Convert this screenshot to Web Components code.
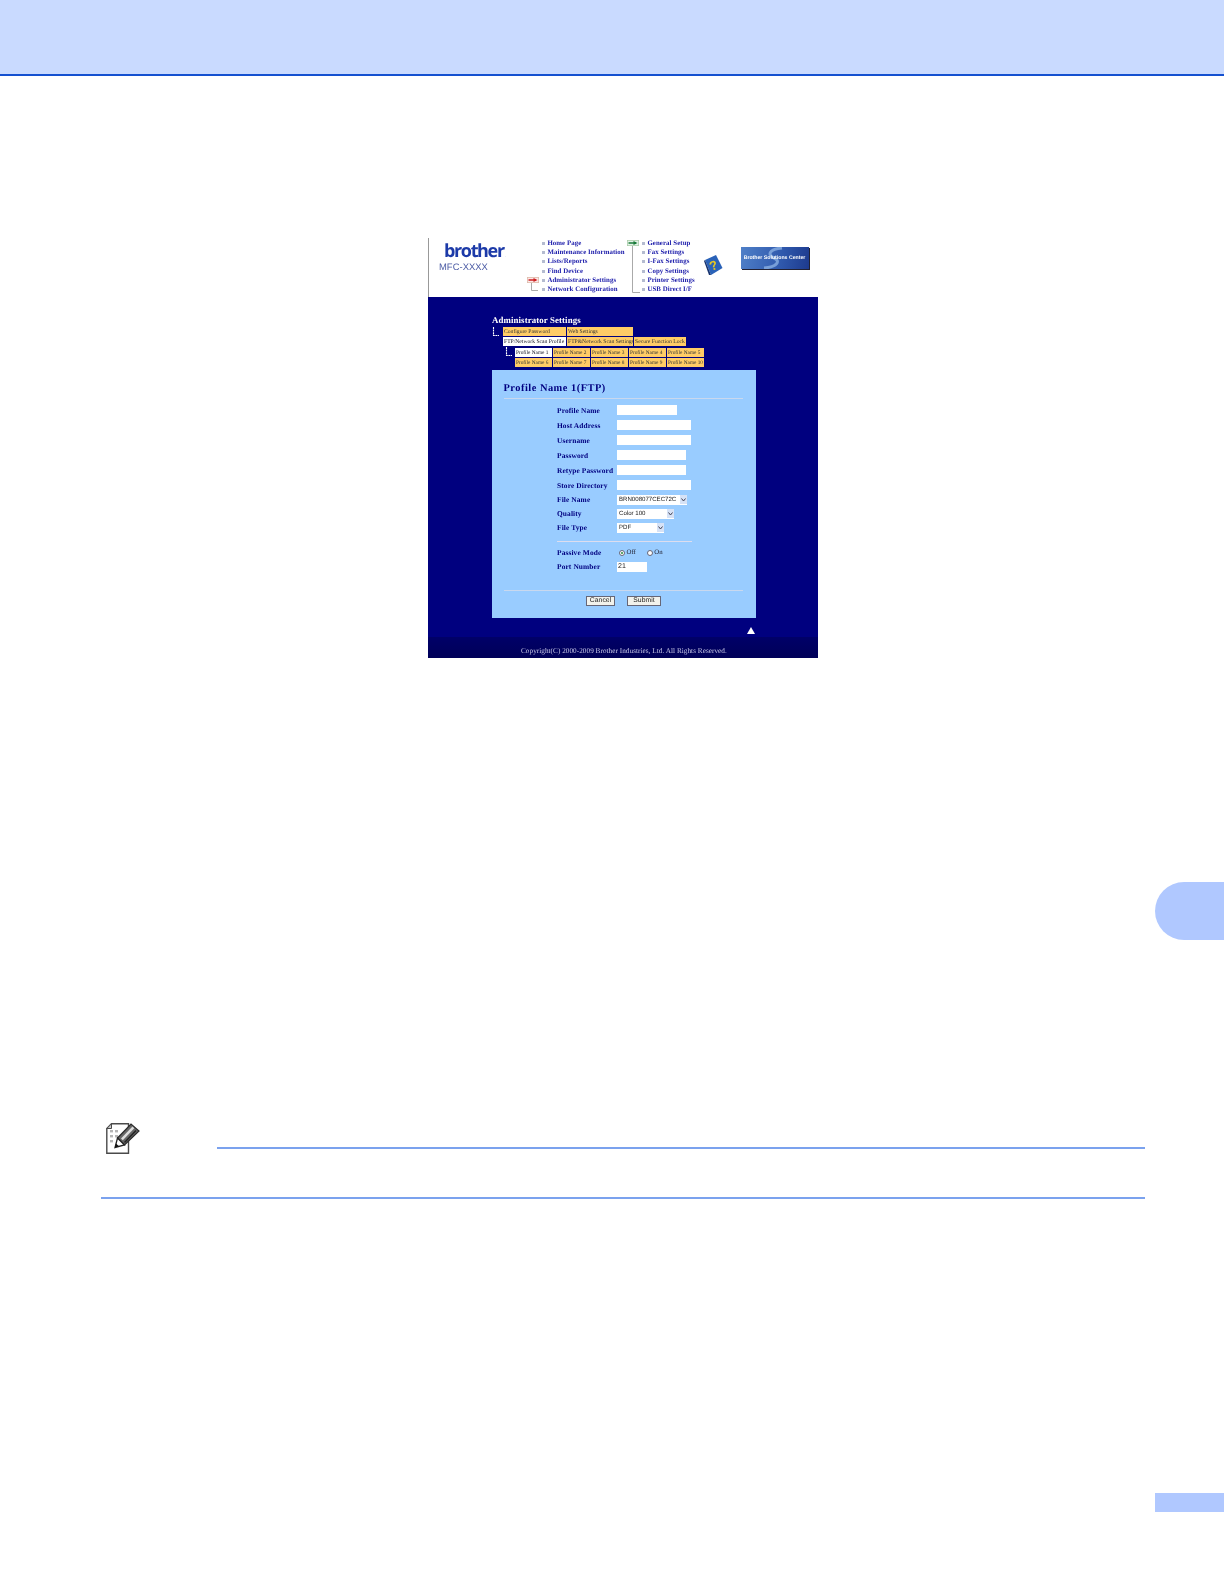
<!DOCTYPE html>
<html lang="en"><head><meta charset="utf-8"><title>Manual page</title>
<style>
html,body{margin:0;padding:0;background:#fff}
body{width:1224px;height:1584px;overflow:hidden;font-family:"Liberation Serif",serif}
</style></head><body>
<manual-page></manual-page>
<script>
function def(name,css,html){
  customElements.define(name,class extends HTMLElement{
    constructor(){super();const r=this.attachShadow({mode:'open'});
      const t=document.createElement('template');
      t.innerHTML='<style>'+css+'</style>'+(typeof html==='function'?html(this):html);
      r.appendChild(t.content.cloneNode(true));}
  });
}
const SERIF='"Liberation Serif",serif', SANS='"Liberation Sans",sans-serif';

def('manual-page',`:host{display:block;width:1224px;height:1584px}
 .top{height:74px;background:#c9daff;border-bottom:2px solid #1450d0}
 web-figure{margin:162px 0 0 428px}
 .side{margin:224px 0 0 1155px;height:58px;background:#b0c8ff;border-radius:29px 0 0 29px}
 note-block{margin-top:183px}
 .pg{margin:294px 0 0 1155px;height:19px;background:#b0c8ff}`,
 `<div class="top"></div><web-figure></web-figure><div class="side"></div><note-block></note-block><div class="pg"></div>`);

def('note-block',`:host{display:block;margin-left:101px;width:1044px;height:74px;border-bottom:2px solid #7ba2ee;box-sizing:content-box}
 .r{display:flex;align-items:flex-start;height:26px}
 svg{margin-left:5px;flex:none;display:block}
 .l{margin-left:77px;margin-top:24px;flex:1;height:2px;background:#7ba2ee}`,
 `<div class="r"><svg width="34" height="32" viewBox="0 0 34 32">
   <path d="M5.5 .8H22.5V30.3H.8V5.5Z" fill="#fff" stroke="#4a4a4a" stroke-width="1.4"/>
   <path d="M5.5 .8V5.5H.8Z" fill="#ccc" stroke="#4a4a4a" stroke-width="1"/>
   <g fill="#b5b5b5"><rect x="4" y="7" width="3" height="2.4"/><rect x="9" y="7" width="3" height="2.4"/><rect x="4" y="12" width="3" height="2.4"/><rect x="9" y="12" width="3" height="2.4"/><rect x="4" y="17" width="3" height="2.4"/></g>
   <path d="M11.5 15 25 1 33 8 18.5 22Z" fill="#666" stroke="#2a2a2a" stroke-width="1.2"/>
   <path d="M15 15.5 26.5 3.6 28.3 5.2 16.8 17.3Z" fill="#ddd"/><path d="M18 19 29.5 7 30.6 8 19 20Z" fill="#222"/>
   <path d="M11.5 15 18.5 22 9 24.5Z" fill="#fff" stroke="#222" stroke-width="1.3"/><path d="M9 24.5 10 20.5 13 23.3Z" fill="#111"/>
 </svg><div class="l"></div></div>`);

def('web-figure',`:host{display:block;width:390px;height:420px;filter:blur(.3px);text-rendering:geometricPrecision}`,
 `<top-bar></top-bar><blue-main></blue-main>`);

def('top-bar',`:host{display:flex;height:59px;box-sizing:border-box;border-left:1px solid #999;background:#fff;align-items:flex-start}
 .logo{width:98px;flex:none}
 .b{font:bold 18px/16px "Open Sans",${SANS};color:#1c3aa8;letter-spacing:-1.35px;margin:5px 0 0 15px;height:15px}
 .b i{font:normal 3px ${SANS};letter-spacing:0;margin-left:1px}
 .m{font:9.4px/11px ${SANS};color:#4a5aa4;letter-spacing:.05px;margin:3px 0 0 10px}
 .book{margin:17px 0 0 -1px;flex:none;display:block}
 .sol{margin:9px 0 0 17.5px;width:68px;height:22px;flex:none;position:relative;background:linear-gradient(100deg,#4f80c8,#2f58ac 60%,#1d3a8e);box-shadow:1px 1px 0 #223;overflow:hidden;
   font:bold 5.2px/22px ${SANS};color:#fff;text-align:center;white-space:nowrap}
 .sol svg{position:absolute;left:20px;top:0}
 .sol span{position:relative}`,
 `<div class="logo"><div class="b">brother<i>.</i></div><div class="m">MFC-XXXX</div></div>
 <nav-col style="width:100px" kind="red" items="Home Page|Maintenance Information|Lists/Reports|Find Device|Administrator Settings|Network Configuration"></nav-col>
 <nav-col style="width:78px" kind="green" items="General Setup|Fax Settings|I-Fax Settings|Copy Settings|Printer Settings|USB Direct I/F"></nav-col>
 <svg class="book" width="19" height="20" viewBox="0 0 19 20"><path d="M1 5 12 0 18.5 13 7 20Z" fill="#2a62b8"/><path d="M1 5 7 20 5 20 0 6Z" fill="#16336f"/><text x="5.4" y="15" font-family="Liberation Sans" font-weight="bold" font-size="13" fill="#e8c820" transform="rotate(-20 9 10)">?</text></svg>
 <div class="sol"><svg width="26" height="22" viewBox="0 0 26 22"><path d="M21 1C8 2 6 8 13 11S16 20 3 21" fill="none" stroke="#8fb4e6" stroke-width="3" opacity=".75"/></svg><span>Brother Solutions Center</span></div>`);

def('nav-col',`:host{display:flex;flex:none;height:59px;box-sizing:border-box;padding-top:1px}
 svg{flex:none;display:block}
 .c{display:flex;flex-direction:column}
 .i{height:9.2px;display:flex;align-items:center;font:bold 6.85px/9px ${SERIF};color:#2020ac;white-space:nowrap;letter-spacing:.08px}
 .i::before{content:"";width:3px;height:3px;background:#b4bbd0;margin:0 2.4px 0 1px;flex:none}`,
 h=>{const red=h.getAttribute('kind')==='red';
  const items=h.getAttribute('items').split('|').map(t=>'<div class="i">'+t+'</div>').join('');
  const g=red?`<svg width="14" height="58" viewBox="0 0 14 58"><rect x=".4" y="38.4" width="11.2" height="5.2" fill="#fde8e8" stroke="#dba" stroke-width=".8"/><path d="M1.5 41H9" stroke="#c22" stroke-width="1.5"/><path d="M6.5 39 10.5 41 6.5 43Z" fill="#c22"/><path d="M4.5 44V51.5H11" fill="none" stroke="#aaa"/></svg>`
   :`<svg width="14" height="58" viewBox="0 0 14 58"><rect x=".4" y="1.4" width="11.2" height="5.2" fill="#e4f4e8" stroke="#aca" stroke-width=".8"/><path d="M1.5 4H9" stroke="#1a7a3a" stroke-width="1.5"/><path d="M6.5 2 10.5 4 6.5 6Z" fill="#1a7a3a"/><path d="M5.5 7V53.5H13" fill="none" stroke="#aaa"/></svg>`;
  return g+'<div class="c">'+items+'</div>';});

def('blue-main',`:host{display:block;height:361px;background:#00007f;position:relative}
 .h{font:bold 8.85px/10px ${SERIF};color:#fff;margin-left:64px;padding-top:18px;letter-spacing:.1px}
 tab-tree{margin:2px 0 3px 64px}
 fig-panel{margin-left:64px}
 .up{height:19px;margin-left:64px;width:264px;display:flex;justify-content:flex-end;align-items:center}
 .up svg{display:block;margin-right:1px;margin-top:6px}
 .f{height:21px;background:linear-gradient(#000068,#000058);font:7.2px/28px ${SERIF};color:#c8c8e8;padding-left:93px;white-space:nowrap;letter-spacing:.05px}`,
 `<div class="h">Administrator Settings</div><tab-tree></tab-tree><fig-panel></fig-panel>
 <div class="up"><svg width="8" height="7" viewBox="0 0 8 7"><path d="M4 0 8 7H0Z" fill="#fff"/></svg></div>
 <div class="f">Copyright(C) 2000-2009 Brother Industries, Ltd. All Rights Reserved.</div>`);

def('tab-row',`:host{display:flex;gap:1px;height:9px;margin-bottom:1px;align-items:flex-start}`,`<slot></slot>`);
def('tab-item',`:host{display:block;flex:none;height:9px;background:#ffcc66;color:#333;font:5.65px/10px ${SERIF};white-space:nowrap;padding-left:1px;box-sizing:border-box;overflow:hidden}
 :host([sel]){background:#fff;color:#112}`,`<slot></slot>`);

def('tab-tree',`:host{display:grid;grid-template-columns:11px 1fr;width:212px}
 svg{display:block}
 .sub{display:grid;grid-template-columns:12px 1fr;height:20px}
 .rows{padding-top:.6px}
 tab-item.n{width:37px;font-size:5.3px}`,
 `<svg style="grid-row:1/3" width="11" height="12" viewBox="0 0 11 12"><path d="M1.5 0V8.5H7" fill="none" stroke="#fff" stroke-width="1.1" stroke-dasharray="2 .6"/></svg>
 <div>
 <tab-row><tab-item style="width:63px">Configure Password</tab-item><tab-item style="width:66px">Web Settings</tab-item></tab-row>
 <tab-row><tab-item sel style="width:63px">FTP/Network Scan Profile</tab-item><tab-item style="width:66px">FTP&amp;Network Scan Settings</tab-item><tab-item style="width:52px">Secure Function Lock</tab-item></tab-row>
 <div class="sub"><svg width="12" height="12" viewBox="0 0 12 12"><path d="M3.5 0V8.5H9" fill="none" stroke="#fff" stroke-width="1.1" stroke-dasharray="2 .6"/></svg>
 <div class="rows">
 <tab-row><tab-item class="n" sel>Profile Name 1</tab-item><tab-item class="n">Profile Name 2</tab-item><tab-item class="n">Profile Name 3</tab-item><tab-item class="n">Profile Name 4</tab-item><tab-item class="n">Profile Name 5</tab-item></tab-row>
 <tab-row><tab-item class="n">Profile Name 6</tab-item><tab-item class="n">Profile Name 7</tab-item><tab-item class="n">Profile Name 8</tab-item><tab-item class="n">Profile Name 9</tab-item><tab-item class="n">Profile Name 10</tab-item></tab-row>
 </div></div></div>`);

def('fig-panel',`:host{display:block;width:264px;height:248px;box-sizing:border-box;background:#99ccff;padding:12px 13px 0 11.5px;color:#000080}
 .tt{font:bold 10.4px/14px ${SERIF};letter-spacing:.5px;height:16px}
 hr{border:0;border-top:1px solid #dde;margin:0;height:0}
 hr.a{border-top-color:#c9d8ee}
 .form{display:grid;grid-template-columns:60px 1fr;margin:4px 0 0 53.5px;font:bold 7.4px/15px ${SERIF};letter-spacing:.12px}
 .l{height:15px;white-space:nowrap}
 .l.s{height:14px;line-height:14px}
 .l.t{height:13px;line-height:13px}
 .v{display:flex;align-items:center;margin-top:-.6px}
 .box{background:#fff;height:10px;display:block}
 .sep{grid-column:1/3;margin:6px 0 4px;width:135px}
 .rad{font:7px/14px ${SANS};color:#222;letter-spacing:0;gap:0}
 .btns{display:flex;margin:5px 0 0 82.5px;gap:12px}`,
 `<div class="tt">Profile Name 1(FTP)</div><hr class="a">
 <div class="form">
  <div class="l">Profile Name</div><div class="v"><span class="box" style="width:60px"></span></div>
  <div class="l">Host Address</div><div class="v"><span class="box" style="width:74px"></span></div>
  <div class="l">Username</div><div class="v"><span class="box" style="width:74px"></span></div>
  <div class="l">Password</div><div class="v"><span class="box" style="width:69px"></span></div>
  <div class="l">Retype Password</div><div class="v"><span class="box" style="width:69px"></span></div>
  <div class="l">Store Directory</div><div class="v"><span class="box" style="width:74px"></span></div>
  <div class="l s">File Name</div><div class="v"><fig-select style="width:70px">BRN008077CEC72C</fig-select></div>
  <div class="l s">Quality</div><div class="v"><fig-select style="width:57px">Color 100</fig-select></div>
  <div class="l s">File Type</div><div class="v"><fig-select style="width:47px">PDF</fig-select></div>
  <hr class="sep">
  <div class="l s">Passive Mode</div><div class="v rad"><fig-radio on style="margin-left:2px">Off</fig-radio><fig-radio style="margin-left:11px">On</fig-radio></div>
  <div class="l t">Port Number</div><div class="v rad"><span class="box" style="width:30px;padding-left:1px;line-height:10px;box-sizing:border-box;font-size:7px">21</span></div>
 </div>
 <hr class="a" style="margin-top:17px">
 <div class="btns"><fig-button style="width:29px">Cancel</fig-button><fig-button style="width:34px">Submit</fig-button></div>`);

def('fig-select',`:host{display:flex;height:10px;background:#fff;align-items:center;font:6.1px/10px ${SANS};color:#222;font-weight:normal;letter-spacing:0;padding-left:2px;box-sizing:border-box;justify-content:space-between;white-space:nowrap}
 i{width:7px;height:9px;background:#d6e2f6;display:flex;align-items:center;justify-content:center;flex:none}
 svg{display:block}`,
 `<slot></slot><i><svg width="5" height="4" viewBox="0 0 5 4"><path d="M.5 .5 2.5 3 4.5 .5" fill="none" stroke="#445" stroke-width="1"/></svg></i>`);

def('fig-radio',`:host{display:inline-flex;align-items:center;gap:1.5px;font:6.8px/15px ${SERIF};color:#223;font-weight:normal}
 i{width:6px;height:6px;border-radius:50%;border:.7px solid #667;background:#fff;box-sizing:border-box;display:flex;align-items:center;justify-content:center}
 :host([on]) i::after{content:"";width:2.4px;height:2.4px;border-radius:50%;background:#2a8a3a}`,
 `<i></i><slot></slot>`);

def('fig-button',`:host{display:block;height:10px;box-sizing:border-box;background:#f2f2ec;border:.7px solid #667;border-right-width:1px;border-bottom-width:1px;font:6.8px/8.5px ${SANS};color:#222;text-align:center;letter-spacing:.05px}`,`<slot></slot>`);
</script>
</body></html>
